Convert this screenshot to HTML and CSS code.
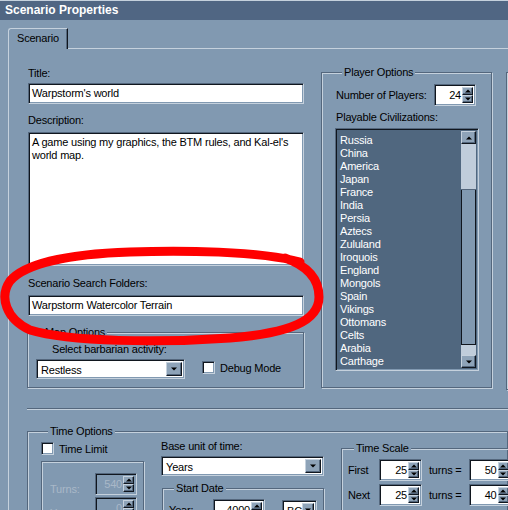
FILE: index.html
```html
<!DOCTYPE html>
<html lang="en">
<head>
  <meta charset="UTF-8" />
  <title>Scenario Properties</title>
  <link rel="stylesheet" href="styles.css">
</head>
<body>

  <div class="window">
    <div class="titlebar">Scenario Properties</div>

    <div class="tabs">
      <div class="tab">Scenario</div>
      <div class="tab-rest"></div>
    </div>

    <div class="page">
      <div class="top">
        <!-- General info -->
        <div class="col-left">
          <div class="lbl">Title:</div>
          <div class="field">Warpstorm's world</div>

          <div class="lbl lbl-gap">Description:</div>
          <div class="field memo">A game using my graphics, the BTM rules, and Kal-el's world map.</div>

          <div class="lbl lbl-gap2">Scenario Search Folders:</div>
          <div class="field">Warpstorm Watercolor Terrain</div>

          <fieldset class="group map-opts">
            <legend>Map Options</legend>
            <div class="lbl barb-lbl">Select barbarian activity:</div>
            <div class="map-row">
              <div class="combo barb">
                <span class="combo-val">Restless</span>
                <span class="btn combo-btn"><i class="arrow-dn"></i></span>
              </div>
              <div class="check-row">
                <span class="check"></span>
                <span>Debug Mode</span>
              </div>
            </div>
          </fieldset>
        </div>

        <!-- Players -->
        <fieldset class="group players">
          <legend>Player Options</legend>
          <div class="num-row">
            <span>Number of Players:</span>
            <div class="spin w42">
              <span class="spin-val">24</span>
              <span class="spin-btns"><i class="btn"><b class="arrow-up"></b></i><i class="btn"><b class="arrow-dn"></b></i></span>
            </div>
          </div>
          <div class="lbl civ-lbl">Playable Civilizations:</div>
          <div class="civ-list">
            <ul class="civ-items">
              <li>Russia</li>
              <li>China</li>
              <li>America</li>
              <li>Japan</li>
              <li>France</li>
              <li>India</li>
              <li>Persia</li>
              <li>Aztecs</li>
              <li>Zululand</li>
              <li>Iroquois</li>
              <li>England</li>
              <li>Mongols</li>
              <li>Spain</li>
              <li>Vikings</li>
              <li>Ottomans</li>
              <li>Celts</li>
              <li>Arabia</li>
              <li>Carthage</li>
              <li>Korea</li>
            </ul>
            <div class="vscroll">
              <span class="btn sb-btn"><b class="arrow-up"></b></span>
              <span class="sb-thumb"></span>
              <span class="sb-track"></span>
              <span class="sb-low"></span>
              <span class="btn sb-btn"><b class="arrow-dn"></b></span>
            </div>
          </div>
        </fieldset>

        <div class="group edge-box"></div>
      </div>

      <div class="sep"></div>

      <!-- Time settings -->
      <fieldset class="group time-opts">
        <legend>Time Options</legend>
        <div class="time-grid">
          <div class="time-col">
            <div class="check-row limit">
              <span class="check"></span>
              <span>Time Limit</span>
            </div>
            <div class="group limit-box">
              <div class="limit-row">
                <span class="off">Turns:</span>
                <div class="spin off w42">
                  <span class="spin-val">540</span>
                  <span class="spin-btns"><i class="btn"><b class="arrow-up"></b></i><i class="btn"><b class="arrow-dn"></b></i></span>
                </div>
              </div>
              <div class="limit-row">
                <span class="off">Years:</span>
                <div class="spin off w42">
                  <span class="spin-val">0</span>
                  <span class="spin-btns"><i class="btn"><b class="arrow-up"></b></i><i class="btn"><b class="arrow-dn"></b></i></span>
                </div>
              </div>
            </div>
          </div>

          <div class="time-col unit-col">
            <div class="lbl">Base unit of time:</div>
            <div class="combo unit">
              <span class="combo-val">Years</span>
              <span class="btn combo-btn"><i class="arrow-dn"></i></span>
            </div>
            <fieldset class="group start-date">
              <legend>Start Date</legend>
              <div class="date-row">
                <span class="year-lbl">Year:</span>
                <div class="spin w52">
                  <span class="spin-val">4000</span>
                  <span class="spin-btns"><i class="btn"><b class="arrow-up"></b></i><i class="btn"><b class="arrow-dn"></b></i></span>
                </div>
                <div class="combo era">
                  <span class="combo-val">BC</span>
                  <span class="btn combo-btn"><i class="arrow-dn"></i></span>
                </div>
              </div>
            </fieldset>
          </div>

          <fieldset class="group time-scale">
            <legend>Time Scale</legend>
            <div class="scale-row">
              <span class="scale-lbl">First</span>
              <div class="spin w43">
                <span class="spin-val">25</span>
                <span class="spin-btns"><i class="btn"><b class="arrow-up"></b></i><i class="btn"><b class="arrow-dn"></b></i></span>
              </div>
              <span class="eq">turns =</span>
              <div class="spin w43">
                <span class="spin-val">50</span>
                <span class="spin-btns"><i class="btn"><b class="arrow-up"></b></i><i class="btn"><b class="arrow-dn"></b></i></span>
              </div>
            </div>
            <div class="scale-row">
              <span class="scale-lbl">Next</span>
              <div class="spin w43">
                <span class="spin-val">25</span>
                <span class="spin-btns"><i class="btn"><b class="arrow-up"></b></i><i class="btn"><b class="arrow-dn"></b></i></span>
              </div>
              <span class="eq">turns =</span>
              <div class="spin w43">
                <span class="spin-val">40</span>
                <span class="spin-btns"><i class="btn"><b class="arrow-up"></b></i><i class="btn"><b class="arrow-dn"></b></i></span>
              </div>
            </div>
          </fieldset>
        </div>
      </fieldset>
    </div>

    <!-- red marker ring drawn over the folder field -->
    <svg class="marker" width="508" height="510" viewBox="0 0 508 510">
      <path d="M300 261 C260 250 180 249 130 251 C70 253 25 262 10 280 C-1 296 6 318 30 329 C70 341 160 342 230 337 C290 332 319 320 319 296 C319 276 305 264 285 257"
            fill="none" stroke="#ff0000" stroke-width="9" stroke-linecap="round" stroke-linejoin="round"/>
    </svg>
  </div>

</body>
</html>
```

FILE: styles.css
```css
body {
  margin: 0;
  background: #8199b1;
  font-family: "Liberation Sans", Arial, sans-serif;
  font-size: 11px;
  letter-spacing: -0.2px;
  color: #000;
  overflow: hidden;
}

.window {
  position: relative;
  width: 508px;
  height: 510px;
  overflow: hidden;
  border-top: 1px solid #c5d1dd;
  box-sizing: border-box;
}

.titlebar {
  height: 19px;
  background: #506683;
  color: #fff;
  font-weight: bold;
  font-size: 12px;
  letter-spacing: 0;
  line-height: 19px;
  padding-left: 5px;
}

/* tab strip */
.tabs {
  display: flex;
  margin-top: 8px;
  height: 21px;
}

.tab {
  margin-left: 8px;
  padding: 0 8px;
  line-height: 19px;
  border-top: 1px solid #c5d1dd;
  border-left: 1px solid #c5d1dd;
  border-right: 1px solid #10161e;
  box-shadow: inset -1px 0 0 #54677d;
  border-radius: 3px 0 0 0;
}

.tab-rest {
  flex: 1;
  border-bottom: 1px solid #c5d1dd;
}

.page {
  padding-top: 18px;
  margin-left: 8px;
  border-left: 1px solid #c5d1dd;
}

.top {
  display: flex;
  align-items: flex-start;
}

.top > * {
  flex-shrink: 0;
}

.col-left {
  width: 276px;
  margin-left: 19px;
}

.lbl {
  line-height: 13px;
  margin-bottom: 3px;
}

.lbl-gap {
  margin-top: 10px;
  margin-bottom: 5px;
}

.lbl-gap2 {
  margin-top: 11px;
  margin-bottom: 5px;
}

/* sunken edit fields */
.field, .spin, .combo, .civ-list, .check {
  border: 1px solid;
  border-color: #54677d #c5d1dd #c5d1dd #54677d;
  box-shadow: inset 1px 1px 0 #10161e, inset -1px -1px 0 #8199b1;
  background: #fff;
  box-sizing: border-box;
}

.field {
  height: 21px;
  line-height: 19px;
  padding-left: 3px;
}

.memo {
  height: 134px;
  line-height: 13px;
  padding: 3px 3px 0 3px;
}

/* raised buttons */
.btn {
  display: block;
  background: #8ea3b8;
  border: 1px solid;
  border-color: #c5d1dd #10161e #10161e #c5d1dd;
  box-shadow: inset -1px -1px 0 #54677d;
  box-sizing: border-box;
  position: relative;
}

.arrow-up, .arrow-dn {
  position: absolute;
  left: 50%;
  top: 50%;
  width: 0;
  height: 0;
  border-left: 3px solid transparent;
  border-right: 3px solid transparent;
  transform: translate(-50%, -50%);
}

.arrow-up {
  border-bottom: 3px solid #000;
}

.arrow-dn {
  border-top: 3px solid #000;
}

/* group boxes */
.group {
  margin: 0;
  padding: 0;
  border: 1px solid #54677d;
  box-shadow: inset 1px 1px 0 #c5d1dd, 1px 1px 0 #c5d1dd;
  min-width: 0;
}

.group legend {
  margin-left: 7px;
  padding: 0 2px;
  line-height: 13px;
  background: #8199b1;
}

.map-opts {
  margin-top: 10px;
  margin-left: -1px;
  height: 62px;
  box-sizing: border-box;
  padding: 4px 0 0 8px;
}

.barb-lbl {
  margin-left: 16px;
  margin-bottom: 3px;
}

.map-row {
  display: flex;
  align-items: center;
}

.combo {
  display: flex;
  height: 20px;
  padding: 2px;
}

.combo-val {
  flex: 1;
  line-height: 16px;
  padding-left: 2px;
}

.combo-btn {
  width: 16px;
}

.barb {
  width: 149px;
}

.check-row {
  display: flex;
  align-items: center;
  gap: 5px;
}

.check {
  width: 13px;
  height: 13px;
}

.map-row .check-row {
  margin-left: 17px;
  margin-top: -3px;
}

/* player options */
.players {
  margin-left: 17px;
  margin-top: -1px;
  width: 171px;
  height: 322px;
  box-sizing: border-box;
  padding: 5px 0 0 14px;
}

.players legend {
  margin-left: 6px;
}

.num-row {
  display: flex;
  align-items: center;
  justify-content: space-between;
  width: 140px;
}

.spin {
  display: flex;
  height: 22px;
  padding: 2px 2px 2px 2px;
}

.spin-val {
  flex: 1;
  text-align: right;
  line-height: 16px;
  padding-right: 1px;
}

.spin-btns {
  width: 11px;
  display: flex;
  flex-direction: column;
}

.spin-btns .btn {
  flex: 1;
}

.w42 { width: 42px; }
.w43 { width: 43px; }
.w52 { width: 52px; }

.civ-lbl {
  margin-top: 5px;
  margin-bottom: 4px;
}

.civ-list {
  display: flex;
  width: 144px;
  height: 243px;
  margin-left: -1px;
  padding: 2px;
  background: #50677f;
}

.civ-items {
  flex: 1;
  list-style: none;
  margin: 0;
  padding: 3px 0 0 2px;
  overflow: hidden;
  color: #fff;
  line-height: 13px;
}

.vscroll {
  width: 15px;
  display: flex;
  flex-direction: column;
  background: #8199b1;
}

.sb-btn {
  height: 13px;
}

.sb-thumb {
  height: 45px;
  background: #c0cddb;
  border-bottom: 1px solid #54677d;
}

.sb-track {
  flex: 1;
  border: 1px solid #10161e;
  border-top: 0;
  background: #8199b1;
}

.sb-low {
  height: 10px;
  background: #c0cddb;
}

.edge-box {
  margin-left: 14px;
  margin-top: 5px;
  width: 40px;
  height: 316px;
}

.sep {
  margin: 18px 0 0 18px;
  height: 0;
  border-top: 1px solid #54677d;
  border-bottom: 1px solid #c5d1dd;
}

/* time options */
.time-opts {
  margin: 15px 0 0 18px;
  padding: 4px 0 0 13px;
  height: 120px;
}

.time-grid {
  display: grid;
  grid-template-columns: 103px 163px 1fr;
  column-gap: 17px;
  align-items: start;
}

.limit-box {
  margin-top: 6px;
  height: 70px;
  padding: 11px 0 0 8px;
  box-sizing: border-box;
}

.limit-row {
  display: flex;
  align-items: center;
  justify-content: space-between;
  width: 87px;
  margin-bottom: 2px;
}

.limit-row .off:first-child {
  margin-top: 9px;
}

.off {
  color: #a9b8c8;
}

.spin.off {
  background: #8199b1;
}

.unit-col {
  margin-top: -2px;
}

.unit {
  margin-top: 3px;
  width: 163px;
}

.start-date {
  margin-top: 6px;
  margin-left: 1px;
  height: 60px;
  padding: 4px 0 0 6px;
}

.start-date legend {
  margin-left: 5px;
}

.date-row {
  display: flex;
  align-items: center;
}

.year-lbl {
  width: 44px;
}

.era {
  margin-left: 17px;
  width: 35px;
}

.time-scale {
  margin-top: 0;
  margin-right: -40px;
  padding: 4px 0 0 6px;
  height: 80px;
}

.time-scale legend {
  margin-left: 6px;
}

.scale-row {
  display: flex;
  align-items: center;
  margin-bottom: 3px;
}

.scale-lbl {
  width: 31px;
}

.eq {
  margin: 0 7px;
}

.marker {
  position: absolute;
  left: 0;
  top: 0;
  pointer-events: none;
}
```
